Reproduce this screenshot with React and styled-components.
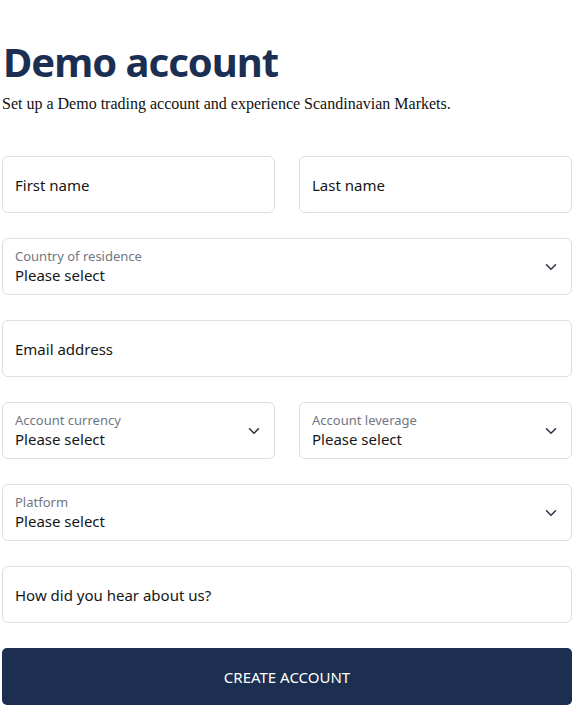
import React from "react";
import styled, { createGlobalStyle } from "styled-components";

const GlobalStyle = createGlobalStyle`
  body {
    margin: 0;
    background: #ffffff;
  }
`;

const Page = styled.div`
  width: 570px;
  padding: 0 0 0 2px;
`;

const Title = styled.h1`
  margin: 37px 0 0 1px;
  font-family: "Noto Sans", "Open Sans", sans-serif;
  font-size: 40px;
  line-height: 50px;
  font-weight: 700;
  color: #1b2f52;
  letter-spacing: -1px;
`;

const Intro = styled.p`
  margin: 7px 0 0;
  font-family: "Liberation Serif", serif;
  font-size: 16px;
  line-height: 20px;
  color: #111111;
`;

const Form = styled.form`
  display: grid;
  grid-template-columns: 273px 273px;
  column-gap: 24px;
  row-gap: 25px;
  margin-top: 42px;
`;

const Field = styled.div`
  grid-column: ${({ $wide }) => ($wide ? "1 / -1" : "auto")};
  position: relative;
  display: flex;
  flex-direction: column;
  justify-content: center;
  height: 57px;
  box-sizing: border-box;
  padding: 0 40px 0 12px;
  border: 1px solid #dedee6;
  border-radius: 6px;
  background: #ffffff;
  font-family: "Noto Sans", "Open Sans", sans-serif;
`;

const Label = styled.span`
  font-size: 13px;
  line-height: 17px;
  color: #707784;
`;

const Value = styled.span`
  font-size: 15px;
  line-height: 20px;
  color: #161616;
`;

const Chevron = styled.svg`
  position: absolute;
  right: 14px;
  top: 50%;
  width: 12px;
  height: 8px;
  margin-top: -4px;
`;

const Submit = styled.button`
  grid-column: 1 / -1;
  height: 57px;
  border: none;
  border-radius: 5px;
  background: #1c2f50;
  color: #ffffff;
  font-family: "Noto Sans", "Open Sans", sans-serif;
  font-size: 15px;
  text-transform: uppercase;
  cursor: pointer;
`;

const ArrowDown = () => (
  <Chevron viewBox="0 0 12 8" fill="none">
    <path
      d="M1.5 1.8 6 6.2 10.5 1.8"
      stroke="#2f3747"
      strokeWidth="1.6"
      strokeLinecap="round"
      strokeLinejoin="round"
    />
  </Chevron>
);

const TextField = ({ placeholder, wide }) => (
  <Field $wide={wide}>
    <Value>{placeholder}</Value>
  </Field>
);

const SelectField = ({ label, wide }) => (
  <Field $wide={wide}>
    <Label>{label}</Label>
    <Value>Please select</Value>
    <ArrowDown />
  </Field>
);

export default function App() {
  return (
    <Page>
      <GlobalStyle />
      <Title>Demo account</Title>
      <Intro>
        Set up a Demo trading account and experience Scandinavian Markets.
      </Intro>
      <Form onSubmit={(e) => e.preventDefault()}>
        <TextField placeholder="First name" />
        <TextField placeholder="Last name" />
        <SelectField label="Country of residence" wide />
        <TextField placeholder="Email address" wide />
        <SelectField label="Account currency" />
        <SelectField label="Account leverage" />
        <SelectField label="Platform" wide />
        <TextField placeholder="How did you hear about us?" wide />
        <Submit type="submit">Create account</Submit>
      </Form>
    </Page>
  );
}
